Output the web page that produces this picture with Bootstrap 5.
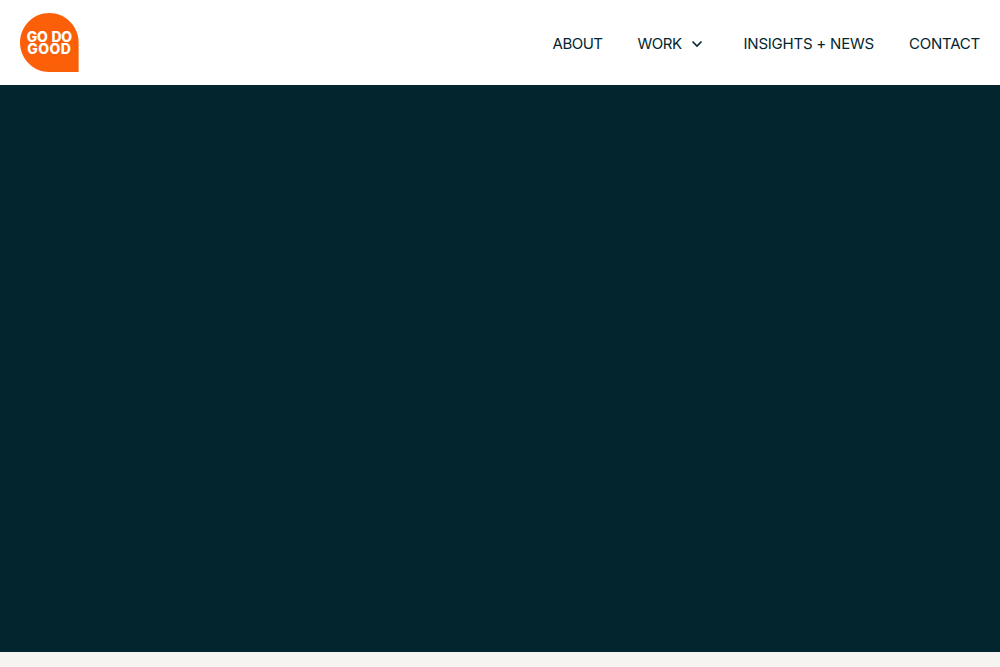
<!DOCTYPE html>
<html lang="en">
<head>
  <meta charset="UTF-8" />
  <meta name="viewport" content="width=device-width, initial-scale=1" />
  <title>Go Do Good</title>
  <link href="https://cdn.jsdelivr.net/npm/bootstrap@5.3.3/dist/css/bootstrap.min.css" rel="stylesheet" />
  <style>
    body {
      background-color: #f6f4f0;
      font-family: "Inter", "Liberation Sans", sans-serif;
    }
    .site-header {
      height: 85px;
      padding: 0 20px;
      background-color: #fff;
    }
    .site-logo {
      display: block;
      width: 59px;
      height: 59px;
      margin-top: -1px;
    }
    .logo-text {
      font-family: "Inter", "Liberation Sans", sans-serif;
      font-size: 14px;
      font-weight: 800;
      letter-spacing: 0.4px;
      fill: #fff;
    }
    .logo-text-top {
      letter-spacing: -0.3px;
      word-spacing: 1px;
    }
    .site-menu {
      gap: 35px;
      margin-top: 2px;
    }
    .site-link {
      color: #03262e;
      font-size: 15px;
      line-height: 20px;
      letter-spacing: -0.22px;
      text-decoration: none;
    }
    .site-link-tight {
      letter-spacing: -0.5px;
    }
    .menu-arrow {
      display: block;
      width: 12px;
      height: 8px;
      margin-left: 9px;
    }
    .work-link {
      margin-right: 6px;
    }
    .hero-block {
      height: 567px;
      background-color: #03262e;
    }
  </style>
</head>
<body>
  <header class="site-header d-flex align-items-center justify-content-between">
    <a href="#" class="site-logo" aria-label="Go Do Good">
      <svg width="59" height="59" viewBox="0 0 59 59" xmlns="http://www.w3.org/2000/svg">
        <path d="M29.3 0C45.5 0 58.6 13.2 58.6 29.5V59H29.3C13.1 59 0 45.8 0 29.5S13.1 0 29.3 0Z" fill="#fb6009" />
        <text class="logo-text logo-text-top" x="29.3" y="29" text-anchor="middle">GO DO</text>
        <text class="logo-text" x="29.3" y="41" text-anchor="middle">GOOD</text>
      </svg>
    </a>
    <nav class="site-menu d-flex align-items-center">
      <a href="#" class="site-link site-link-tight">ABOUT</a>
      <a href="#" class="site-link site-link-tight work-link d-flex align-items-center">WORK
        <svg class="menu-arrow" viewBox="0 0 12 8" xmlns="http://www.w3.org/2000/svg"><path d="M1.5 1.5 6 6l4.5-4.5" fill="none" stroke="#03262e" stroke-width="1.6" /></svg>
      </a>
      <a href="#" class="site-link">INSIGHTS + NEWS</a>
      <a href="#" class="site-link">CONTACT</a>
    </nav>
  </header>
  <main class="hero-block"></main>
  <script src="https://cdn.jsdelivr.net/npm/bootstrap@5.3.3/dist/js/bootstrap.bundle.min.js"></script>
</body>
</html>
